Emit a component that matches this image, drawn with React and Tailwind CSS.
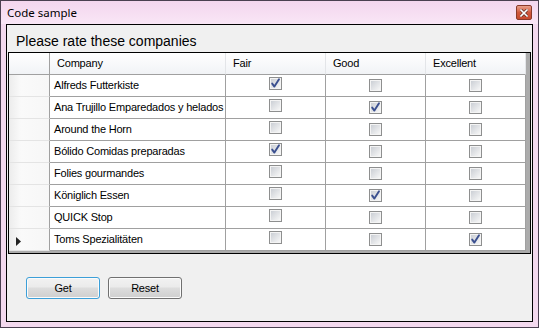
import { useState } from "react";

const COMPANIES = [
  { name: "Alfreds Futterkiste", rating: "fair" },
  { name: "Ana Trujillo Emparedados y helados", rating: "good" },
  { name: "Around the Horn", rating: null },
  { name: "Bólido Comidas preparadas", rating: "fair" },
  { name: "Folies gourmandes", rating: null },
  { name: "Königlich Essen", rating: "good" },
  { name: "QUICK Stop", rating: null },
  { name: "Toms Spezialitäten", rating: "excellent" },
];

const Checkbox = ({ checked, lifted }) => (
  <span
    className={`relative w-[13px] h-[13px] border border-[#8e8f8f] bg-[#f4f4f4] p-px ${
      lifted ? "-translate-y-[2px]" : ""
    }`}
  >
    <span className="block w-full h-full bg-gradient-to-br from-[#cbcfd5] to-[#f7f7f7]" />
    {checked && (
      <svg
        viewBox="0 0 13 13"
        className="absolute -left-px -top-px w-[13px] h-[13px]"
      >
        <path
          d="M3.2 6.6 L5.4 9.6 L10 2.2"
          fill="none"
          stroke="#3a4f8f"
          strokeWidth="1.9"
          strokeLinecap="round"
          strokeLinejoin="round"
        />
      </svg>
    )}
  </span>
);

const RateCell = ({ checked, lifted }) => (
  <div className="w-[100px] h-[22px] bg-white border-b border-r border-[#a0a0a0] flex items-center justify-center">
    <Checkbox checked={checked} lifted={lifted} />
  </div>
);

const RowHeader = ({ current }) => (
  <div className="w-[41px] h-[22px] border-r border-r-[#a0a0a0] border-b border-b-[#e4e4e4] bg-gradient-to-r from-[#ececec] via-[#fafafa] via-30% to-[#f7f7f7] flex items-center pl-[7px]">
    {current && (
      <svg viewBox="0 0 5 9" className="w-[5px] h-[9px] mt-[3px]">
        <path d="M0 0 L5 4.5 L0 9 Z" fill="#222" />
      </svg>
    )}
  </div>
);

const HeaderCell = ({ label, width }) => (
  <div
    className={`${width} h-[22px] border-b border-b-[#a0a0a0] border-r border-r-[#e3e5e8] bg-gradient-to-b from-[#ffffff] to-[#f1f3f6] flex items-center pl-[7px]`}
  >
    {label}
  </div>
);

const WinButton = ({ label, focused }) => (
  <button
    className={`w-[74px] h-[22px] rounded-[3px] border ${
      focused ? "border-[#3c9fd8]" : "border-[#707070]"
    } bg-[linear-gradient(#f2f2f2,#ebebeb_45%,#dddddd_50%,#cfcfcf)] text-[11px] tracking-[-0.2px] text-black leading-none shadow-[inset_0_0_0_1px_#fbfbfb]`}
  >
    {label}
  </button>
);

const App = () => {
  const [rows] = useState(COMPANIES);

  return (
    <div className="w-[539px] h-[328px] border border-[#4a4050] bg-[#f3d9ee] flex flex-col font-['Liberation_Sans',Arial,sans-serif] text-black">
      <div className="h-[23px] flex items-center justify-between bg-gradient-to-b from-[#f3d6ee] to-[#f9e6f6]">
        <span className="pl-[6px] text-[11.5px] font-['Noto_Sans',sans-serif] text-black">
          Code sample
        </span>
        <div className="mr-[6px] w-[16px] h-[15px] rounded-[2px] border border-[#8a3a2a] bg-gradient-to-b from-[#e8a08c] via-[#d0583c] to-[#c64a2e] flex items-center justify-center">
          <svg viewBox="0 0 8 8" className="w-[8px] h-[8px]">
            <path
              d="M1 1 L7 7 M7 1 L1 7"
              stroke="#5a2a20"
              strokeWidth="3"
              strokeLinecap="square"
            />
            <path
              d="M1 1 L7 7 M7 1 L1 7"
              stroke="#ffffff"
              strokeWidth="1.6"
              strokeLinecap="square"
            />
          </svg>
        </div>
      </div>

      <div className="flex-1 mx-[5px] mb-[5px] border border-black bg-[#f0f0f0] flex flex-col">
        <div className="h-[27px] pl-[9px] pt-[8px] text-[14px] leading-[17px]">
          Please rate these companies
        </div>

        <div className="ml-px w-[523px] h-[202px] border border-black bg-[#ababab] text-[11px] tracking-[-0.2px]">
          <div className="flex">
            <div className="w-[41px] h-[22px] border-b border-b-[#a0a0a0] border-r border-r-[#a0a0a0] bg-gradient-to-b from-[#ffffff] to-[#f1f3f6]" />
            <HeaderCell label="Company" width="w-[176px]" />
            <HeaderCell label="Fair" width="w-[100px]" />
            <HeaderCell label="Good" width="w-[100px]" />
            <HeaderCell label="Excellent" width="w-[100px] border-r-[#a0a0a0]" />
          </div>

          {rows.map((row, i) => (
            <div key={row.name} className="flex">
              <RowHeader current={i === rows.length - 1} />
              <div className="w-[176px] h-[22px] bg-white border-b border-r border-[#a0a0a0] flex items-center pl-[4px] whitespace-nowrap overflow-hidden">
                {row.name}
              </div>
              <RateCell checked={row.rating === "fair"} lifted />
              <RateCell checked={row.rating === "good"} />
              <RateCell checked={row.rating === "excellent"} />
            </div>
          ))}
        </div>

        <div className="mt-[23px] pl-[19px] flex gap-[8px]">
          <WinButton label="Get" focused />
          <WinButton label="Reset" />
        </div>
      </div>
    </div>
  );
};

export default App;
